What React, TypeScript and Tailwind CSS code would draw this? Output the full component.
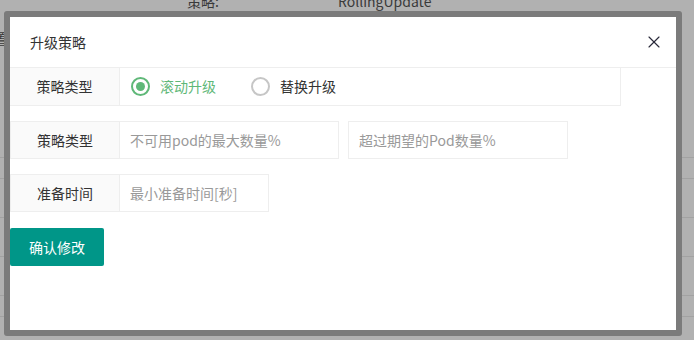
import { X } from "lucide-react";

const font = { fontFamily: '"Noto Sans CJK SC", "Liberation Sans", sans-serif' };

function Radio({ label, checked }: { label: string; checked?: boolean }) {
  return (
    <div className="flex items-center">
      <span
        className={
          "w-[19px] h-[19px] rounded-full border-2 flex items-center justify-center " +
          (checked ? "border-[#5fb878]" : "border-[#c6c6c6]")
        }
      >
        {checked && <span className="w-[9px] h-[9px] rounded-full bg-[#5fb878]" />}
      </span>
      <span className={"ml-[10px] text-[14px] " + (checked ? "text-[#5fb878]" : "text-[#333]")}>{label}</span>
    </div>
  );
}

function Field({ label, children }: { label: string; children: React.ReactNode }) {
  return (
    <div className="flex h-[38px]">
      <div className="w-[110px] shrink-0 bg-[#fafafa] border border-[#eee] flex items-center justify-center text-[14px] text-[#333]">
        {label}
      </div>
      {children}
    </div>
  );
}

function Input({ placeholder, w }: { placeholder: string; w: string }) {
  return (
    <div className={"-ml-px border border-[#eee] flex items-center pl-[10px] text-[14px] text-[#999] bg-white " + w}>
      {placeholder}
    </div>
  );
}

export default function App() {
  return (
    <div className="relative w-[694px] h-[340px] bg-[#b1b1b1] overflow-hidden" style={font}>
      {/* page behind the overlay */}
      <div className="absolute top-[-9px] left-[187px] text-[14px] text-[#3a3a3a]">策略:</div>
      <div className="absolute top-[-9px] left-[338px] text-[14px] text-[#3a3a3a]">RollingUpdate</div>
      <div className="absolute top-[28px] left-[-6px] text-[14px] text-[#3a3a3a]">置</div>
      <div className="absolute left-0 right-0 top-[157px] border-t border-[#a2a2a2]" />
      <div className="absolute left-0 right-0 top-[178px] border-t border-[#a2a2a2]" />
      <div className="absolute left-0 right-0 top-[217px] border-t border-[#a2a2a2]" />
      <div className="absolute left-0 right-0 top-[256px] border-t border-[#a2a2a2]" />
      <div className="absolute left-0 right-0 top-[295px] border-t border-[#a2a2a2]" />
      <div className="absolute left-0 right-0 top-[316px] border-t border-[#a2a2a2]" />

      {/* dialog */}
      <div className="absolute left-[4px] top-[11px] w-[678px] h-[325px] border-[6px] border-[#7b7b7b] rounded-[3px] bg-white flex flex-col">
        <div className="h-[51px] shrink-0 border-b border-[#eee] flex items-center justify-between pl-[20px] pr-[12px]">
          <span className="text-[14px] text-[#333]">升级策略</span>
          <X size={20} strokeWidth={1.4} className="text-[#2a2a3a]" />
        </div>

        <div className="flex flex-col">
          <div className="flex h-[38px]">
            <div className="w-[110px] shrink-0 bg-[#fafafa] border-r border-b border-[#eee] flex items-center justify-center text-[14px] text-[#333]">
              策略类型
            </div>
            <div className="w-[501px] border-r border-b border-[#eee] flex items-center pl-[11px] gap-[35px]">
              <Radio label="滚动升级" checked />
              <Radio label="替换升级" />
            </div>
          </div>

          <div className="mt-[15px]">
            <Field label="策略类型">
              <Input placeholder="不可用pod的最大数量%" w="w-[220px]" />
              <div className="w-[9px]" />
              <div className="w-[220px] border border-[#eee] flex items-center pl-[10px] text-[14px] text-[#999]">
                超过期望的Pod数量%
              </div>
            </Field>
          </div>

          <div className="mt-[15px]">
            <Field label="准备时间">
              <Input placeholder="最小准备时间[秒]" w="w-[150px]" />
            </Field>
          </div>

          <button className="mt-[16px] w-[94px] h-[38px] bg-[#009688] text-white text-[14px] rounded-[2px] flex items-center justify-center">
            确认修改
          </button>
        </div>
      </div>
    </div>
  );
}
